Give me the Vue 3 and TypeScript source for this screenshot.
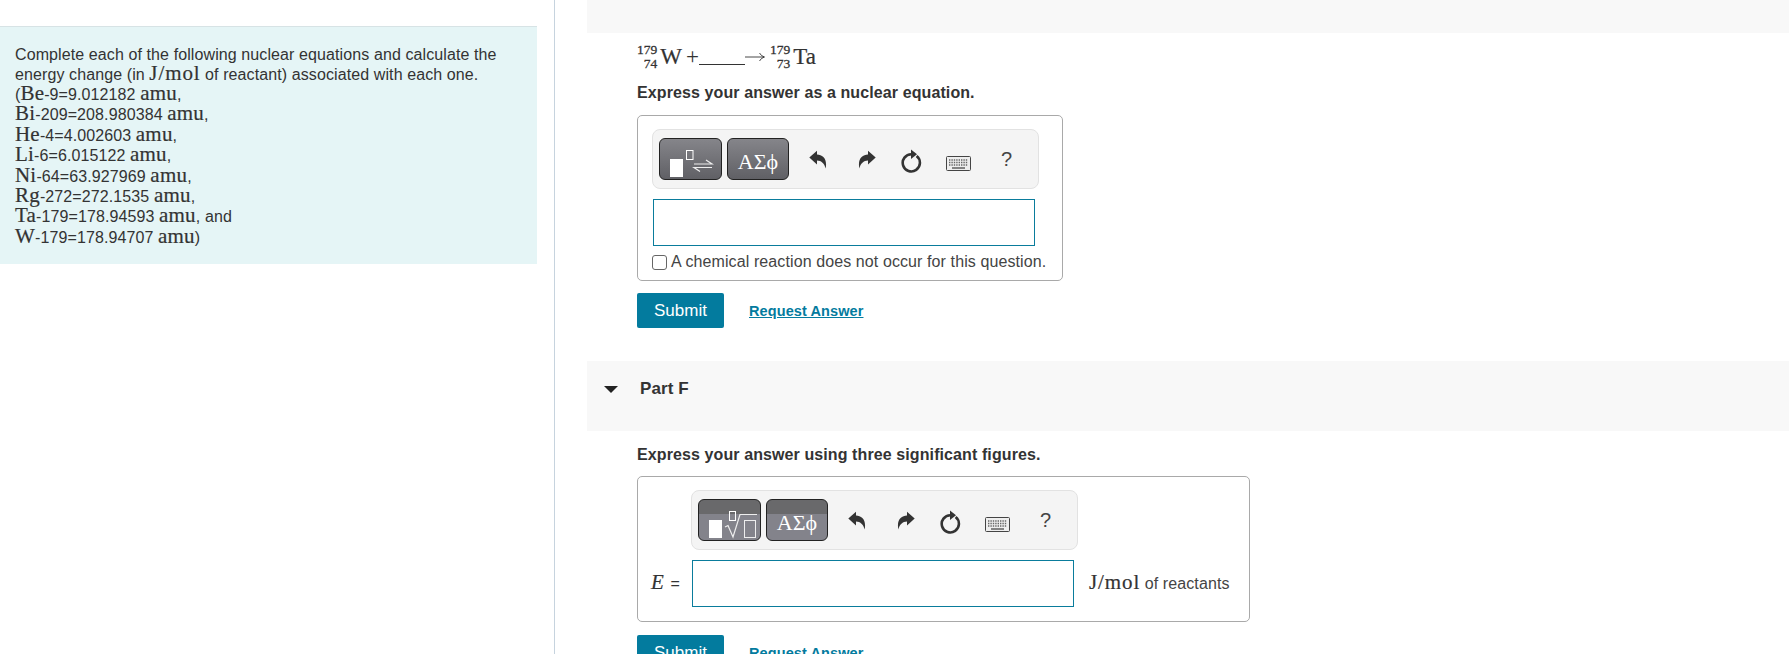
<template>
  <div class="page">
    <svg class="defs" aria-hidden="true">
      <symbol id="undo" viewBox="0 0 18 19">
        <path d="M0.3 7.5 L8 0.8 V4.6 C13.8 4.8 18.6 9 16.6 18.6 C15.4 13.4 12.5 10.8 8 10.6 V14.4 Z" fill="#333" />
      </symbol>
      <symbol id="redo" viewBox="0 0 18 19">
        <path d="M17.7 7.5 L10 0.8 V4.6 C4.2 4.8 -0.6 9 1.4 18.6 C2.6 13.4 5.5 10.8 10 10.6 V14.4 Z" fill="#333" />
      </symbol>
      <symbol id="reload" viewBox="0 0 22 24">
        <path d="M11.5 5.2 A8.6 8.6 0 1 0 16.6 7" fill="none" stroke="#333" stroke-width="2.6" />
        <path d="M11 0.4 L17 5.2 L11 10 Z" fill="#333" />
      </symbol>
      <symbol id="keyboard" viewBox="0 0 25 15">
        <rect x="0.5" y="0.5" width="24" height="14" rx="1" fill="#eee" stroke="#444" />
        <path d="M3 4 H22 M3 6.5 H22 M3 9 H22" stroke="#666" stroke-width="1.4" stroke-dasharray="1.4 1" fill="none" />
        <path d="M6 12 H19" stroke="#555" stroke-width="1.4" fill="none" />
      </symbol>
    </svg>

    <aside class="left">
      <div class="stem">
        <p>Complete each of the following nuclear equations and calculate the energy change (in <span class="math units">J/mol</span> of reactant) associated with each one.</p>
        <p v-for="line in masses" :key="line.el" class="mass">{{ line.open }}<span class="math">{{ line.el }}</span>-{{ line.value }} <span class="math">amu</span>{{ line.tail }}</p>
      </div>
    </aside>

    <main class="right">
      <div class="part-head part-head-top"></div>

      <section class="part-body">
        <div class="equation">
          <span class="nuclide"><span>179</span><span>74</span></span><span>W</span>
          <span class="plus">+</span><span class="blank"></span>
          <svg class="arrow" width="20" height="12" viewBox="0 0 20 12">
            <path d="M0 6 H19 M14.5 2 Q16 5 19.5 6 Q16 7 14.5 10" fill="none" stroke="#333" stroke-width="0.9" />
          </svg>
          <span class="nuclide nuclide-2"><span>179</span><span>73</span></span><span>Ta</span>
        </div>
        <p class="prompt">Express your answer as a nuclear equation.</p>

        <div class="answer answer-e">
          <div class="toolbar">
            <button class="tool tool-1">
              <span class="tmpl-square"></span>
              <svg class="tmpl-mark" width="61" height="40" viewBox="0 0 61 40">
                <rect x="26.5" y="11.5" width="6.5" height="9" fill="none" stroke="#fff" />
                <path d="M34 25 H52 L46 21 M52 28.5 H34 L40 32.5" fill="none" stroke="#eee" stroke-width="1.2" />
              </svg>
            </button>
            <button class="tool tool-2">ΑΣϕ</button>
            <svg class="ic ic-undo"><use href="#undo" /></svg>
            <svg class="ic ic-redo"><use href="#redo" /></svg>
            <svg class="ic ic-reload"><use href="#reload" /></svg>
            <svg class="ic ic-kb"><use href="#keyboard" /></svg>
            <span class="help">?</span>
          </div>
          <div class="input input-e"></div>
          <label class="check"><span class="box"></span>A chemical reaction does not occur for this question.</label>
        </div>

        <div class="actions">
          <button class="submit">Submit</button>
          <a class="request">Request Answer</a>
        </div>
      </section>

      <div class="part-head">
        <span class="caret"></span>
        <span class="part-title">Part F</span>
      </div>

      <section class="part-body part-f">
        <p class="prompt prompt-f">Express your answer using three significant figures.</p>

        <div class="answer answer-f">
          <div class="toolbar">
            <button class="tool tool-1 banded">
              <span class="tmpl-square"></span>
              <svg class="tmpl-mark" width="61" height="40" viewBox="0 0 61 40">
                <rect x="30.5" y="11.5" width="6" height="9" fill="none" stroke="#fff" />
                <path d="M26 27 L29 25.5 L34 37 L41 14.5 H58" fill="none" stroke="#eee" stroke-width="1.2" />
                <rect x="45.5" y="20.5" width="11" height="17" fill="none" stroke="#eee" />
              </svg>
            </button>
            <button class="tool tool-2 banded">ΑΣϕ</button>
            <svg class="ic ic-undo"><use href="#undo" /></svg>
            <svg class="ic ic-redo"><use href="#redo" /></svg>
            <svg class="ic ic-reload"><use href="#reload" /></svg>
            <svg class="ic ic-kb"><use href="#keyboard" /></svg>
            <span class="help">?</span>
          </div>
          <div class="row">
            <span class="label"><i class="math">E</i> =</span>
            <div class="input input-f"></div>
            <span class="unit"><span class="math units">J/mol</span> of reactants</span>
          </div>
        </div>

        <div class="actions actions-f">
          <button class="submit">Submit</button>
          <a class="request">Request Answer</a>
        </div>
      </section>
    </main>
  </div>
</template>

<script setup lang="ts">
interface MassLine {
  open: string
  el: string
  value: string
  tail: string
}

const masses: MassLine[] = [
  { open: '(', el: 'Be', value: '9=9.012182', tail: ',' },
  { open: '', el: 'Bi', value: '209=208.980384', tail: ',' },
  { open: '', el: 'He', value: '4=4.002603', tail: ',' },
  { open: '', el: 'Li', value: '6=6.015122', tail: ',' },
  { open: '', el: 'Ni', value: '64=63.927969', tail: ',' },
  { open: '', el: 'Rg', value: '272=272.1535', tail: ',' },
  { open: '', el: 'Ta', value: '179=178.94593', tail: ', and' },
  { open: '', el: 'W', value: '179=178.94707', tail: ')' }
]
</script>

<style>
html,
body {
  margin: 0;
  background: #fff;
}
</style>

<style scoped>
.page {
  display: flex;
  width: 1789px;
  height: 654px;
  overflow: hidden;
  font-family: "Liberation Sans", Arial, sans-serif;
  font-size: 16px;
  letter-spacing: 0.1px;
  color: #333;
}

.defs {
  position: absolute;
  width: 0;
  height: 0;
}

.math {
  font-family: "Liberation Serif", "Times New Roman", serif;
  font-size: 21px;
  line-height: 0;
  letter-spacing: 0.2px;
  color: #333;
  -webkit-text-stroke: 0.2px #333;
}

.units {
  letter-spacing: 0.9px;
}

p {
  margin: 0;
}

/* left column */
.left {
  box-sizing: border-box;
  flex: none;
  width: 555px;
  padding-top: 26px;
  border-right: 1px solid #c6d3de;
}

.stem {
  width: 537px;
  box-sizing: border-box;
  padding: 18px 15px 16px;
  border-top: 1px solid #d7e3e5;
  background: #e5f5f6;
  line-height: 20px;
}

.mass {
  height: 20.4px;
  line-height: 20.4px;
}

/* right column */
.right {
  flex: 1;
  margin-left: 32px;
}

.part-head {
  display: flex;
  align-items: flex-start;
  height: 70px;
  background: #f8f8f8;
}

.part-head-top {
  height: 33px;
}

.caret {
  width: 0;
  height: 0;
  margin: 25px 0 0 17px;
  border-left: 7px solid transparent;
  border-right: 7px solid transparent;
  border-top: 7px solid #222;
}

.part-title {
  margin: 18px 0 0 22px;
  font-weight: bold;
  font-size: 17px;
  line-height: 20px;
}

.part-body {
  padding-left: 50px;
}

.equation {
  display: flex;
  align-items: center;
  height: 34px;
  margin-top: 7px;
  margin-bottom: 1px;
  font-family: "Liberation Serif", "Times New Roman", serif;
  font-size: 23px;
  letter-spacing: 0;
  -webkit-text-stroke: 0.2px #333;
}

.nuclide {
  display: inline-flex;
  flex-direction: column;
  align-items: flex-end;
  margin-right: 3px;
  font-size: 13.5px;
  line-height: 14px;
  -webkit-text-stroke: 0.3px #333;
}

.nuclide-2 {
  margin-left: 5px;
  margin-right: 3px;
}

.plus {
  margin-left: 4px;
  -webkit-text-stroke: 0;
}

.blank {
  width: 46px;
  height: 14px;
  border-bottom: 1px solid #333;
}

.arrow {
  flex: none;
}

.prompt {
  margin-top: 9px;
  font-weight: bold;
  line-height: 20px;
}

.prompt-f {
  margin-top: 14px;
}

.answer {
  box-sizing: border-box;
  margin-top: 12px;
  border: 1px solid #a9a9a9;
  border-radius: 5px;
  padding: 13px 14px 0;
}

.prompt-f + .answer {
  margin-top: 11px;
}

.answer-e {
  width: 426px;
  height: 166px;
}

.answer-f {
  width: 613px;
  height: 146px;
  padding-left: 53px;
}

.toolbar {
  display: flex;
  align-items: center;
  box-sizing: border-box;
  width: 387px;
  height: 60px;
  padding-left: 6px;
  border: 1px solid #e2e2e2;
  border-radius: 8px;
  background: #f4f4f4;
}

.tool {
  position: relative;
  flex: none;
  box-sizing: border-box;
  width: 63px;
  height: 42px;
  padding: 0;
  margin-right: 5px;
  border: 1px solid #222;
  border-radius: 6px;
  background: linear-gradient(#85858a, #606065);
  color: #fff;
  font-family: "Liberation Serif", "Times New Roman", serif;
  font-size: 22px;
  letter-spacing: 0;
}

.banded {
  background: linear-gradient(#69696b 0 14px, #83838b 14px 100%);
}

.tool-2 {
  width: 62px;
  padding-top: 5px;
}

.tmpl-square {
  position: absolute;
  left: 10px;
  bottom: 2px;
  width: 13px;
  height: 18px;
  background: #fff;
}

.tmpl-mark {
  position: absolute;
  left: 0;
  top: 0;
}

.ic {
  flex: none;
}

.ic-undo {
  width: 18px;
  height: 19px;
  margin: 1px 0 0 15px;
}

.ic-redo {
  width: 18px;
  height: 19px;
  margin: 1px 0 0 31px;
}

.ic-reload {
  width: 22px;
  height: 24px;
  margin: 3px 0 0 24px;
}

.ic-kb {
  width: 25px;
  height: 15px;
  margin: 9px 0 0 24px;
}

.help {
  margin-left: 30px;
  font-size: 20px;
  color: #444;
}

.input {
  box-sizing: border-box;
  height: 47px;
  border: 1px solid #0a7c9c;
  background: #fff;
}

.input-e {
  width: 382px;
  margin: 10px 0 0 1px;
}

.check {
  display: flex;
  align-items: center;
  margin-top: 6px;
  white-space: nowrap;
  line-height: 20px;
  color: #444;
}

.box {
  box-sizing: border-box;
  width: 15px;
  height: 15px;
  margin-right: 4px;
  border: 1px solid #666;
  border-radius: 3px;
  background: #fff;
}

.row {
  display: flex;
  align-items: center;
  margin: 10px 0 0 -40px;
}

.label {
  width: 41px;
  flex: none;
  word-spacing: 2px;
}

.input-f {
  flex: none;
  width: 382px;
}

.unit {
  margin-left: 15px;
  white-space: nowrap;
  color: #444;
}

.actions {
  display: flex;
  align-items: center;
  margin-top: 12px;
  height: 35px;
  margin-bottom: 33px;
}

.actions-f {
  margin-top: 13px;
}

.submit {
  width: 87px;
  height: 35px;
  padding: 0;
  border: none;
  border-radius: 2px;
  background: #037b9e;
  color: #fff;
  font-family: inherit;
  font-size: 17px;
}

.request {
  margin-left: 25px;
  color: #037b9e;
  font-size: 14.5px;
  font-weight: bold;
  text-decoration: underline;
}
</style>
